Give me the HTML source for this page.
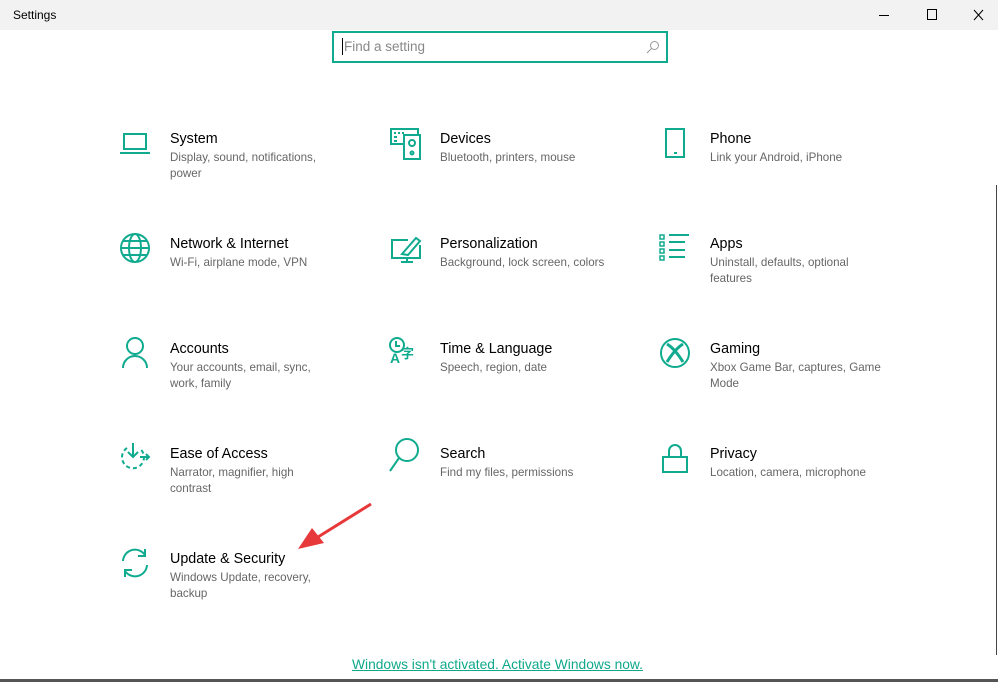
<!DOCTYPE html>
<html><head><meta charset="utf-8"><style>
*{margin:0;padding:0;box-sizing:border-box}
body{width:998px;height:682px;background:#fff;position:relative;overflow:hidden;font-family:"Liberation Sans",sans-serif}
.tb{position:absolute;left:0;top:0;width:998px;height:30px;background:#f2f2f2}
.tb .t{position:absolute;left:13px;top:8px;font-size:12px;color:#000}
.srch{position:absolute;left:332px;top:31px;width:336px;height:32px;border:2px solid #10ab8f;background:#fff}
.srch span{position:absolute;left:10px;top:6px;font-size:13.5px;color:#888}
.srch i{position:absolute;left:8px;top:5px;width:1px;height:17px;background:#000}
.it{position:absolute}
.it .h{position:absolute;left:50px;top:-7px;font-size:14.3px;color:#000;white-space:nowrap}
.it .d{position:absolute;left:50px;top:12px;font-size:11.6px;line-height:16px;color:#666;white-space:nowrap}
.act{position:absolute;left:352px;top:657px;font-size:13.8px;color:#10a88b;text-decoration:underline;white-space:nowrap}
</style></head><body>
<div class="tb"><div class="t">Settings</div>
<svg style="position:absolute;left:870px;top:5px" width="120" height="20" fill="none" stroke="#000" stroke-width="1">
<line x1="9" y1="10.5" x2="19" y2="10.5"/><rect x="57.5" y="4.5" width="9" height="10"/><path d="M104 5l9 10M113 5l-9 10"/></svg></div>
<div class="srch"><i></i><span>Find a setting</span>
<svg style="position:absolute;right:6px;top:7px" width="14" height="14" fill="none" stroke="#999" stroke-width="1"><circle cx="8.5" cy="5.5" r="4"/><line x1="5.5" y1="8.5" x2="1" y2="13"/></svg></div>
<div style="position:absolute;left:996px;top:185px;width:1px;height:470px;background:#444"></div>
<div style="position:absolute;left:0;top:679px;width:998px;height:3px;background:#555"></div>

<svg width="998" height="682" style="position:absolute;left:0;top:0" fill="none" stroke="#10ab8f" stroke-width="2">
<rect x="124" y="134" width="22" height="15"/><path d="M120 153h30"/>
<rect x="391" y="129" width="27" height="15"/><rect x="404" y="135" width="16" height="24" fill="#fff"/><circle cx="412" cy="143" r="3"/><circle cx="412" cy="153" r="1.5"/>
<path d="M394 133h2M398 133h2M402 133h2M394 137h3M394 141h3" stroke-width="2"/>
<rect x="666" y="129" width="18" height="28"/><path d="M674 153h3"/>
<circle cx="135" cy="248" r="14"/><ellipse cx="135" cy="248" rx="6" ry="14"/><path d="M121 248h28M123 241h24M123 255h24"/>
<path d="M408 240h-16v18h28v-13M401 262h12M407 258v4"/><path d="M402 254l14-16 4 3-12 14z"/>
<path d="M660 235h4v4h-4zM660 242h4v4h-4zM660 249h4v4h-4zM660 256h4v4h-4z" stroke-width="1.5"/><path d="M669 235h20M669 242h16M669 250h16M669 257h16"/>
<circle cx="135" cy="346" r="8"/><path d="M123 368a12 12 0 0 1 24 0"/>
<path d="M127 448a11 11 0 1 0 12 0" stroke-dasharray="4 3"/><path d="M133 443v14M128 452l5 5 5-5M140 457h9M146 454l3 3-3 3"/>
<circle cx="407" cy="450" r="11"/><path d="M399 458l-9 13"/>
<path d="M669 457v-6a6 6 0 0 1 12 0v6"/><rect x="663" y="457" width="24" height="15"/>
<circle cx="675" cy="353" r="14"/><path d="M667 344q8 5 16 18M683 344q-8 5-16 18" stroke-width="3"/>
<path d="M123 561a12 12 0 0 1 22-6M147 565a12 12 0 0 1-22 6"/><path d="M145 549v7h-7M125 577v-7h7"/>
</svg>
<div style="position:absolute;left:388px;top:336px;color:#10ab8f;font:bold 14px 'Liberation Sans','Noto Sans CJK SC',sans-serif">
<svg width="20" height="20" style="position:absolute;left:0;top:0" fill="none" stroke="#10ab8f" stroke-width="2"><circle cx="9" cy="9" r="7"/><path d="M8 5v5h4"/></svg>
<span style="position:absolute;left:2px;top:14px">A</span><span style="position:absolute;left:13px;top:7px;font-size:13px">字</span></div>

<div class="it" style="left:120px;top:138px"><div class="h">System</div><div class="d">Display, sound, notifications,<br>power</div></div>
<div class="it" style="left:390px;top:138px"><div class="h">Devices</div><div class="d">Bluetooth, printers, mouse</div></div>
<div class="it" style="left:660px;top:138px"><div class="h">Phone</div><div class="d">Link your Android, iPhone</div></div>
<div class="it" style="left:120px;top:243px"><div class="h">Network &amp; Internet</div><div class="d">Wi-Fi, airplane mode, VPN</div></div>
<div class="it" style="left:390px;top:243px"><div class="h">Personalization</div><div class="d">Background, lock screen, colors</div></div>
<div class="it" style="left:660px;top:243px"><div class="h">Apps</div><div class="d">Uninstall, defaults, optional<br>features</div></div>
<div class="it" style="left:120px;top:348px"><div class="h">Accounts</div><div class="d">Your accounts, email, sync,<br>work, family</div></div>
<div class="it" style="left:390px;top:348px"><div class="h">Time &amp; Language</div><div class="d">Speech, region, date</div></div>
<div class="it" style="left:660px;top:348px"><div class="h">Gaming</div><div class="d">Xbox Game Bar, captures, Game<br>Mode</div></div>
<div class="it" style="left:120px;top:453px"><div class="h">Ease of Access</div><div class="d">Narrator, magnifier, high<br>contrast</div></div>
<div class="it" style="left:390px;top:453px"><div class="h">Search</div><div class="d">Find my files, permissions</div></div>
<div class="it" style="left:660px;top:453px"><div class="h">Privacy</div><div class="d">Location, camera, microphone</div></div>
<div class="it" style="left:120px;top:558px"><div class="h">Update &amp; Security</div><div class="d">Windows Update, recovery,<br>backup</div></div>

<svg width="998" height="682" style="position:absolute;left:0;top:0">
<line x1="371" y1="504" x2="318" y2="537" stroke="#e8393a" stroke-width="3"/>
<polygon points="298,549 312,528 324,543" fill="#e8393a"/></svg>

<div class="act">Windows isn't activated. Activate Windows now.</div>
</body></html>
